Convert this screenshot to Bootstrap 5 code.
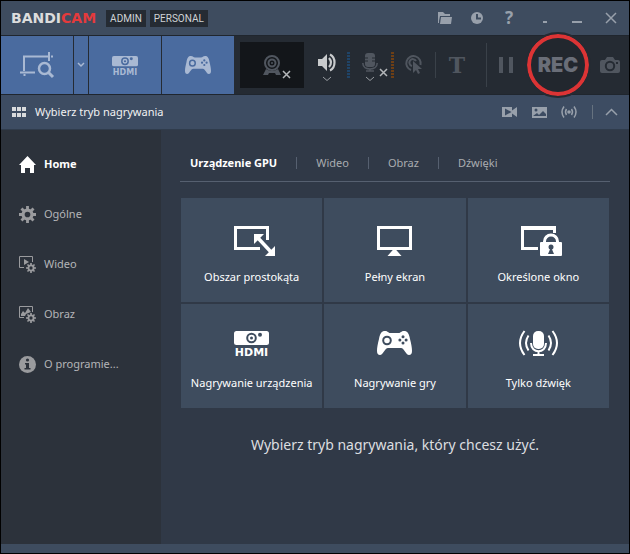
<!DOCTYPE html>
<html lang="pl">
<head>
<meta charset="utf-8">
<meta name="viewport" content="width=device-width, initial-scale=1">
<title>Bandicam</title>
<link href="https://cdn.jsdelivr.net/npm/bootstrap@5.3.0/dist/css/bootstrap.min.css" rel="stylesheet">
<style>
:root{--bar:#3e4c5f;--tool:#252b33;--panel:#303947;--side:#2c323b;--mode:#4a6b9f;--tile:#3e4c5e;--soft:#98a0ab;--dim:#50565f}
body{font-family:"Noto Sans","Open Sans",sans-serif;font-size:11px;line-height:16px;color:#fff;background:var(--panel)}
.app{border:1px solid #000}
button{background:none;border:0;padding:0;color:inherit}
svg{display:block;flex:none;overflow:visible}
.titlebar{background:var(--bar);height:34px;padding-left:10px;gap:4px}
.logo{font:bold 14px/18px "DejaVu Sans",sans-serif;color:#dcdcdc;margin-right:6px}
.logo span{color:#e43a3c}
.edition{font:10px/17px Roboto,sans-serif;background:#252b33;color:#d0d3d6;padding:0 4px;text-align:center}
.winbtn{width:32px;height:26px;color:var(--soft)}
.winbtn.wide{width:36px}
.winbtn.help{font:bold 17px/26px "Noto Sans",sans-serif}
.toolbar{background:var(--tool);height:60px;border-top:1px solid #20262e;border-bottom:1px solid #20262e}
.mode{background:var(--mode);color:#a9b9d3;--hole:var(--mode);width:72px;margin-right:1px}
.mode.drop{width:14px}
.cam{background:#13161a;width:64px;height:46px;margin-left:5px}
.tb{color:var(--dim);--hole:var(--tool)}
.w38{width:38px}.w40{width:40px}.w42{width:42px}
.meter{width:3px;height:26px;margin-left:1px}
.blue{background:repeating-linear-gradient(#1f4468 0 2px,transparent 2px 3px)}
.orange{background:repeating-linear-gradient(#6d3f16 0 2px,transparent 2px 3px)}
.rule{width:1px;background:#3a4149;height:26px}
.rule.tall{height:44px}
.text-tool{font:bold 22px/24px "DejaVu Serif",serif}
.rec{width:66px;height:66px;border-radius:50%;border:2px solid #252b33;margin:-4px 0;z-index:1;box-shadow:inset 0 0 0 4px #dc3435;background:#22272e;color:#6a6e78;font:900 20px/24px Inter,sans-serif}
.strip{background:#3d4c62;height:35px;border-bottom:1px solid #303c4c;padding-left:11px;gap:9px;color:#f2f2f2}
.strip .winbtn{width:30px}
.strip .winbtn.fold{width:36px}
.strip .rule{height:14px;background:#66727f}
.side{background:var(--side);width:160px;padding-top:9px;color:#b4b5b8}
.side a{height:50px;padding-left:18px;gap:8px;color:inherit;--hole:var(--side)}
.side svg{color:#9a9b9e}
.side a.active,.side a.active svg{color:#fff}
.pane{padding:18px 19px}
.tabs{height:34px;border-bottom:1px solid #566070;padding:0 10px 3px;gap:19px;color:#a9acb0}
.tabs a{color:inherit}
.tabs a.active{color:#fff}
.tabs .rule{height:12px;background:#566070}
.tiles{display:grid;grid-template-columns:repeat(3,1fr);gap:2px;padding:0 1px;margin-top:16px}
.tile{background:var(--tile);--hole:var(--tile);height:104px;padding-top:27px}
.pic{height:36px}
.tile .cap{margin-top:8px}
.msg{font-size:14px;line-height:24px;color:#dcdee0;margin-top:25px}
.foot{background:var(--bar);height:9px}
.hd{font:bold 11px "DejaVu Sans",sans-serif}
.hs{font:bold 8px "DejaVu Sans",sans-serif}
</style>
<script src="https://cdn.jsdelivr.net/npm/bootstrap@5.3.0/dist/js/bootstrap.bundle.min.js"></script>
</head>
<body>
<svg width="0" height="0" class="position-absolute" aria-hidden="true">
<symbol id="pad" viewBox="0 0 35 24"><path fill="currentColor" d="M8 0C11 0 11 2 13.500 2h8C24 2 24 0 27 0c3.500 0 5 2.500 6 8 1.300 5 2 9 2 12 0 2.500-1 4-3 4-3 0-5-7-8-7H11c-3 0-5 7-8 7-2 0-3-1.500-3-4 0-3 .7-7 2-12C3 2.500 4.500 0 8 0z"/><circle cx="10" cy="9.500" r="3.800" fill="none" stroke="var(--hole)" stroke-width="2"/><g fill="var(--hole)"><circle cx="26" cy="5.800" r="1.500"/><circle cx="26" cy="12" r="1.500"/><circle cx="22.900" cy="8.900" r="1.500"/><circle cx="29.100" cy="8.900" r="1.500"/></g></symbol>
<symbol id="proj" viewBox="0 0 35 14"><rect width="35" height="14" rx="2.500" fill="currentColor"/><circle cx="17.500" cy="7" r="4.300" fill="none" stroke="var(--hole)" stroke-width="2"/><circle cx="17.500" cy="7" r="1.500" fill="var(--hole)"/><circle cx="26" cy="3.700" r="2" fill="var(--hole)"/></symbol>
<symbol id="gear" viewBox="0 0 18 18"><g stroke="currentColor" stroke-width="3"><path id="teeth" d="M9 0v4.500M9 13.500V18M0 9h4.500M13.500 9H18"/><use href="#teeth" transform="rotate(45 9 9)"/></g><circle cx="9" cy="9" r="4.700" fill="none" stroke="currentColor" stroke-width="3.400"/></symbol>
</svg>
<div class="app min-vh-100 d-flex flex-column">
<header class="titlebar d-flex align-items-center">
<div class="logo">BANDI<span>CAM</span></div>
<span class="edition">ADMIN</span><span class="edition">PERSONAL</span>
<div class="ms-auto d-flex align-items-center">
<button class="winbtn d-flex align-items-center justify-content-center" aria-label="Folder"><svg width="14" height="12" fill="currentColor"><path d="M0 0h5l2 2h5v2H2L1 9v2H0z"/><path d="M3 5h11l-1 7H2z"/></svg></button>
<button class="winbtn d-flex align-items-center justify-content-center" aria-label="Harmonogram"><svg width="12" height="12"><circle cx="6" cy="6" r="6" fill="currentColor"/><path d="M6 2v4.500h4" fill="none" stroke="#3e4c5f" stroke-width="2"/></svg></button>
<button class="winbtn help" aria-label="Pomoc">?</button>
<button class="winbtn d-flex align-items-center justify-content-center ms-1" aria-label="Zwiń do zasobnika"><svg width="4" height="12"><path d="M0 9h4v2H0z" fill="currentColor"/></svg></button>
<button class="winbtn d-flex align-items-center justify-content-center" aria-label="Minimalizuj"><svg width="10" height="12"><path d="M0 9h10v2H0z" fill="currentColor"/></svg></button>
<button class="winbtn wide d-flex align-items-center justify-content-center" aria-label="Zamknij"><svg width="10" height="10"><path d="M0 0l10 10M10 0L0 10" stroke="currentColor" stroke-width="1.500"/></svg></button>
</div>
</header>
<div class="toolbar d-flex align-items-center">
<button class="mode h-100 d-flex align-items-center justify-content-center" aria-label="Prostokąt"><svg width="34" height="26" fill="none" stroke="currentColor"><path d="M4 19V4.500h24M29 0v9M0 20.500h15M4.500 22v2" stroke-width="2"/><path d="M31 4.500h2" stroke-width="2"/><circle cx="24.500" cy="16.500" r="5.500" stroke-width="2.500"/><path d="M28 20l5 5" stroke-width="3"/></svg></button>
<button class="mode drop h-100 d-flex align-items-center justify-content-center" aria-label="Więcej trybów"><svg width="6" height="4"><path d="M0 0l3 3 3-3" fill="none" stroke="currentColor" stroke-width="1.500"/></svg></button>
<button class="mode h-100 d-flex align-items-center justify-content-center" aria-label="HDMI"><svg width="26" height="19"><use href="#proj" width="26" height="10.500"/><text class="hs" x="13" y="19" text-anchor="middle" fill="currentColor">HDMI</text></svg></button>
<button class="mode h-100 d-flex align-items-center justify-content-center" aria-label="Gra"><svg width="26" height="18"><use href="#pad" width="26" height="18"/></svg></button>
<button class="cam tb d-flex align-items-center justify-content-center" aria-label="Kamera"><svg width="18" height="21"><circle cx="9" cy="8" r="7" fill="none" stroke="currentColor" stroke-width="2"/><circle cx="9" cy="8" r="3.500" fill="none" stroke="currentColor" stroke-width="2"/><circle cx="9" cy="8" r="1" fill="currentColor"/><path d="M3 14q6 4 12 0l3 6H13l-1-2H6l-1 2H0z" fill="currentColor"/><path d="M20 16l7 7M27 16l-7 7" stroke="#b4b7ba" stroke-width="1.500"/></svg></button>
<button class="tb w38 ms-1 d-flex justify-content-center" aria-label="Głośnik"><svg width="18" height="28"><path d="M0 8h4l5-5v17L4 15H0z" fill="#c9cbcd"/><path d="M11 7q4 4.500 0 9M12 3.500c6 3 6 13 0 16" fill="none" stroke="#c9cbcd" stroke-width="2.200"/><path d="M5 26l4 3.500 4-3.500" fill="none" stroke="#999da2"/></svg></button>
<div class="meter blue"></div>
<button class="tb w40 d-flex justify-content-center" aria-label="Mikrofon"><svg width="16" height="28" fill="none" stroke="currentColor"><rect x="3" y="2" width="10" height="14" rx="3" fill="currentColor" stroke="none"/><path d="M.8 12c0 8 14.400 8 14.400 0M8 18v2M4 20h8" stroke-width="1.600"/><path d="M3 7h3M3 10h3M10 7h3M10 10h3" stroke="var(--hole)"/><path d="M4 26l4 3.500 4-3.500" stroke="#999da2"/><path d="M18 18l7 7M25 18l-7 7" stroke="#b4b7ba" stroke-width="1.500"/></svg></button>
<div class="meter orange"></div>
<button class="tb w40 d-flex justify-content-center" aria-label="Efekty myszy"><svg width="18" height="20"><path d="M6 15A7.200 7.200 0 1 1 15.500 10M7 11a3.500 3.500 0 1 1 4-5" fill="none" stroke="currentColor" stroke-width="2"/><path d="M8 6v12l3-3 2 4 2-1-2-4h4z" fill="currentColor"/></svg></button>
<div class="rule ms-auto"></div>
<button class="tb w42 text-tool">T</button>
<div class="rule tall ms-2"></div>
<button class="tb w38 d-flex justify-content-center" aria-label="Pauza"><svg width="14" height="16"><path d="M0 0h4v16H0zM10 0h4v16h-4z" fill="currentColor"/></svg></button>
<button class="rec position-relative">REC</button>
<button class="tb w38 d-flex justify-content-center" aria-label="Zrzut ekranu"><svg width="20" height="16"><path d="M2 3h3l2-3h6l2 3h3q2 0 2 2v9q0 2-2 2H2q-2 0-2-2V5q0-2 2-2z" fill="currentColor"/><circle cx="10" cy="9" r="4.200" fill="none" stroke="var(--hole)" stroke-width="2"/><path d="M16 5h2v2h-2z" fill="var(--hole)"/></svg></button>
</div>
<div class="strip d-flex align-items-center">
<svg width="14" height="10" fill="#d9dbdd"><path d="M0 0h4v4H0zM5 0h4v4H5zM10 0h4v4h-4zM0 6h4v4H0zM5 6h4v4H5zM10 6h4v4h-4z"/></svg>
<span>Wybierz tryb nagrywania</span>
<div class="ms-auto d-flex align-items-center">
<button class="winbtn d-flex align-items-center justify-content-center" aria-label="Pliki wideo"><svg width="15" height="10"><path fill="currentColor" fill-rule="evenodd" d="M0 0h10v3.500L15 0v10l-5-3.500V10H0zM3 1.500v7L9.500 5z"/></svg></button>
<button class="winbtn d-flex align-items-center justify-content-center" aria-label="Pliki obrazów"><svg width="15" height="11"><path fill="currentColor" d="M0 0h15v11H0z"/><circle cx="4" cy="3" r="1.500" fill="#3d4c62"/><path d="M1 9l4-3 2 2 4-4 3 3v2z" fill="#3d4c62"/></svg></button>
<button class="winbtn d-flex align-items-center justify-content-center" aria-label="Pliki dźwięku"><svg width="16" height="12" fill="none" stroke="currentColor" stroke-width="1.500"><circle cx="8" cy="6" r="1.800" fill="currentColor" stroke="none"/><path d="M3 .5q-4 5.500 0 11M13 .5q4 5.500 0 11M5.500 3q-2 3 0 6M10.500 3q2 3 0 6"/></svg></button>
<div class="rule ms-2"></div>
<button class="winbtn fold d-flex align-items-center justify-content-center" aria-label="Zwiń"><svg width="11" height="6"><path d="M0 6l5.500-5.500L11 6" fill="none" stroke="currentColor" stroke-width="1.500"/></svg></button>
</div>
</div>
<main class="d-flex flex-grow-1">
<nav class="side flex-shrink-0 d-flex flex-column">
<a href="#" class="active fw-bold d-flex align-items-center text-decoration-none"><svg width="17" height="17"><path d="M8.500 0L17 9h-2v8h-4v-5H6v5H2V9H0z" fill="currentColor"/></svg>Home</a>
<a href="#" class="d-flex align-items-center text-decoration-none"><svg width="17" height="17"><use href="#gear" width="17" height="17"/></svg>Ogólne</a>
<a href="#" class="d-flex align-items-center text-decoration-none"><svg width="17" height="17"><path d="M5 11.500H.5V.5h13V6" fill="none" stroke="currentColor"/><path d="M5 3l5 3-5 3z" fill="currentColor"/><use href="#gear" x="7" y="7" width="10" height="10"/></svg>Wideo</a>
<a href="#" class="d-flex align-items-center text-decoration-none"><svg width="17" height="17"><path d="M5 11.500H.5V.5h13V6" fill="none" stroke="currentColor"/><path d="M2 10V8l2-3 2 2 3-5 3 4-5 2-1 2z" fill="currentColor"/><use href="#gear" x="7" y="7" width="10" height="10"/></svg>Obraz</a>
<a href="#" class="d-flex align-items-center text-decoration-none"><svg width="17" height="17"><circle cx="8.500" cy="8.500" r="8.500" fill="currentColor"/><circle cx="8.500" cy="4" r="1.600" fill="var(--hole)"/><path d="M6 7h4v5h1.500v1.500h-6V12H7V8.500H6z" fill="var(--hole)"/></svg>O programie...</a>
</nav>
<section class="pane flex-grow-1">
<nav class="tabs d-flex align-items-center">
<a href="#" class="active fw-bold text-decoration-none">Urządzenie GPU</a><span class="rule"></span><a href="#" class="text-decoration-none">Wideo</a><span class="rule"></span><a href="#" class="text-decoration-none">Obraz</a><span class="rule"></span><a href="#" class="text-decoration-none">Dźwięki</a>
</nav>
<div class="tiles">
<button class="tile d-flex flex-column align-items-center"><span class="pic"><svg width="35" height="32"><path d="M33.500 15V2.500h-32v21H26" fill="none" stroke="#fff" stroke-width="3"/><path d="M23 12l15 16" stroke="var(--hole)" stroke-width="7"/><path d="M24 13l13 14" stroke="#fff" stroke-width="3.500"/><path d="M20 9h10L20 19zM41 31H31l10-10z" fill="#fff"/></svg></span><span class="cap">Obszar prostokąta</span></button>
<button class="tile d-flex flex-column align-items-center"><span class="pic"><svg width="35" height="32"><path d="M1.500 2.500h32v21h-32z" fill="none" stroke="#fff" stroke-width="3"/><path d="M17.500 23l7 8h-14z" fill="#fff"/></svg></span><span class="cap">Pełny ekran</span></button>
<button class="tile d-flex flex-column align-items-center"><span class="pic"><svg width="35" height="32"><path d="M33.500 8V2.500h-32v21H17" fill="none" stroke="#fff" stroke-width="3"/><path d="M0 1h35v4H0z" fill="#fff"/><rect x="19" y="17" width="22" height="14" rx="1" fill="#fff"/><path d="M23.500 18v-1.500a6.500 6.500 0 0 1 13 0V18" fill="none" stroke="#fff" stroke-width="3"/><circle cx="30" cy="22" r="2.500" fill="var(--hole)"/><path d="M30 22l3 7h-6z" fill="var(--hole)"/></svg></span><span class="cap">Określone okno</span></button>
<button class="tile d-flex flex-column align-items-center"><span class="pic"><svg width="35" height="26"><use href="#proj" width="35" height="14"/><text class="hd" x="17.500" y="25" text-anchor="middle" fill="#fff">HDMI</text></svg></span><span class="cap">Nagrywanie urządzenia</span></button>
<button class="tile d-flex flex-column align-items-center"><span class="pic"><svg width="35" height="24"><use href="#pad" width="35" height="24"/></svg></span><span class="cap">Nagrywanie gry</span></button>
<button class="tile d-flex flex-column align-items-center"><span class="pic"><svg width="39" height="25" fill="none" stroke="#fff" stroke-width="2"><rect x="14" y="0" width="11" height="18" rx="5" fill="#fff" stroke="none"/><path d="M12 12c0 11 15 11 15 0M19.500 20v3M14 24h11M5.500 0q-9 12 0 24M33.500 0q9 12 0 24M9.500 4.500q-5 7.500 0 15M29.500 4.500q5 7.500 0 15"/></svg></span><span class="cap">Tylko dźwięk</span></button>
</div>
<p class="msg text-center mb-0">Wybierz tryb nagrywania, który chcesz użyć.</p>
</section>
</main>
<footer class="foot"></footer>
</div>
</body>
</html>
